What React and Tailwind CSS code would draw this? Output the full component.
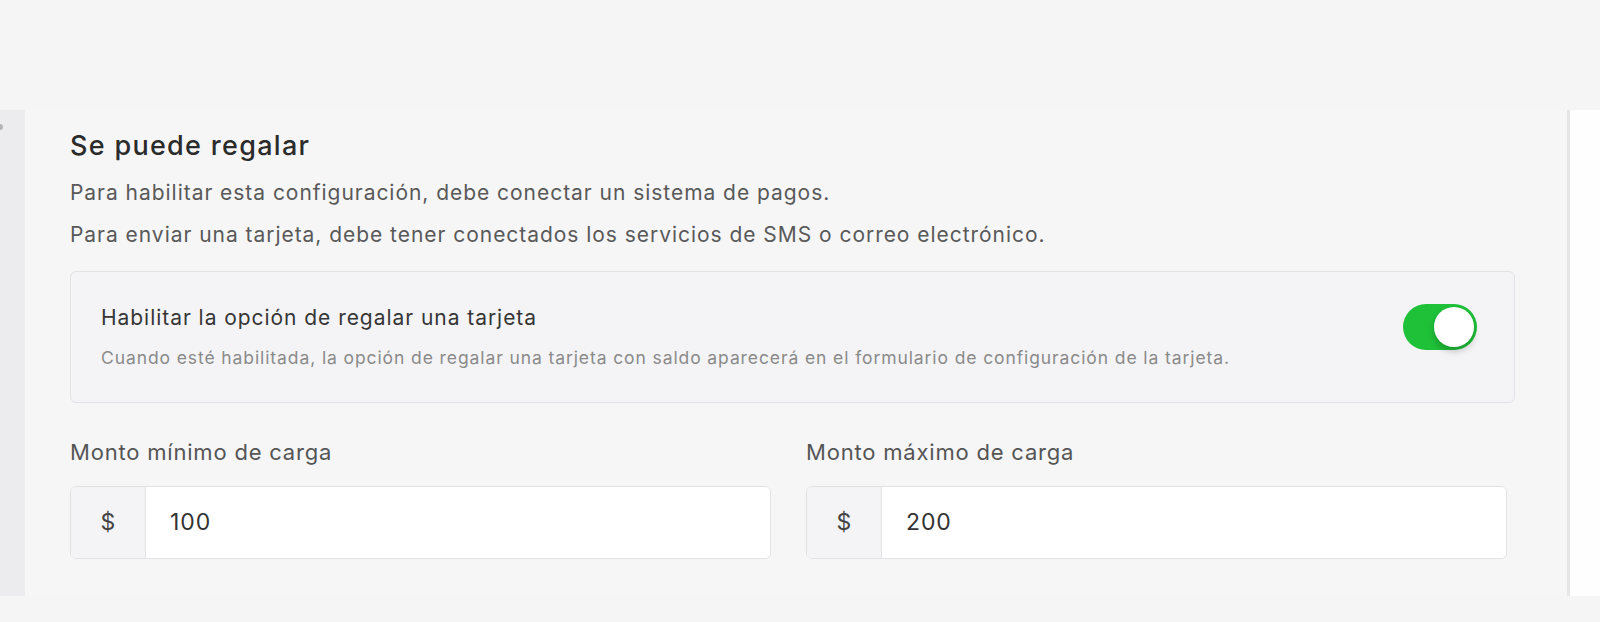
export default function App() {
  return (
    <div
      className="h-[622px] w-full bg-[#f5f5f5] flex flex-col overflow-hidden"
      style={{ fontFamily: "Inter, 'Noto Sans', sans-serif" }}
    >
      {/* top band */}
      <div className="h-[110px] shrink-0" />

      <div className="flex h-[486px] shrink-0">
        {/* left rail */}
        <div className="w-[25px] bg-[#ececef] pt-[14px]">
          <div className="w-[3px] h-[6px] bg-[#b5b5b8] rounded-r" />
        </div>

        {/* main panel */}
        <main className="flex-1 bg-[#f6f6f7] pl-[45px] pr-[52px] pt-[20px]">
          <h2 className="text-[27px] leading-[32px] font-medium tracking-[1.3px] text-[#2b2b2b]">
            Se puede regalar
          </h2>
          <div className="mt-[10px] text-[21px] leading-[42px] tracking-[0.96px] text-[#595959]">
            <p>Para habilitar esta configuración, debe conectar un sistema de pagos.</p>
            <p>
              Para enviar una tarjeta, debe tener conectados los servicios de SMS o correo
              electrónico.
            </p>
          </div>

          {/* toggle card */}
          <div className="mt-[15px] h-[132px] flex items-center justify-between rounded-md border border-[#e3e3e6] bg-[#f4f4f6] pl-[30px] pr-[37px]">
            <div>
              <div className="text-[21px] leading-[28px] tracking-[0.95px] text-[#363636]">
                Habilitar la opción de regalar una tarjeta
              </div>
              <div className="mt-[14px] text-[17.5px] leading-[24px] tracking-[0.9px] text-[#8a8a8a]">
                Cuando esté habilitada, la opción de regalar una tarjeta con saldo aparecerá en el
                formulario de configuración de la tarjeta.
              </div>
            </div>
            <button className="mb-[20px] w-[74px] h-[46px] rounded-full bg-[#1fc139] flex items-center justify-end px-[3px] shrink-0">
              <span className="w-[40px] h-[40px] rounded-full bg-white shadow-[0_4px_7px_rgba(0,0,0,0.22)]" />
            </button>
          </div>

          {/* amount inputs */}
          <div className="mt-[35px] mr-[8px] grid grid-cols-2 gap-[35px]">
            {[
              ["Monto mínimo de carga", "100"],
              ["Monto máximo de carga", "200"],
            ].map(([label, value]) => (
              <div key={label}>
                <label className="block text-[22px] leading-[28px] tracking-[0.8px] text-[#555]">
                  {label}
                </label>
                <div className="mt-[20px] h-[73px] flex rounded-md border border-[#e2e2e5] bg-white overflow-hidden">
                  <div className="w-[75px] flex items-center justify-center bg-[#f4f4f6] border-r border-[#e2e2e5] text-[23px] text-[#444]">
                    $
                  </div>
                  <input
                    readOnly
                    value={value}
                    className="flex-1 pl-[24px] text-[23px] tracking-[0.9px] text-[#333] bg-white outline-none"
                  />
                </div>
              </div>
            ))}
          </div>
        </main>

        {/* right panel */}
        <div className="w-[33px] bg-[#fefefe] border-l-[3px] border-[#e6e6e8]" />
      </div>
    </div>
  );
}
